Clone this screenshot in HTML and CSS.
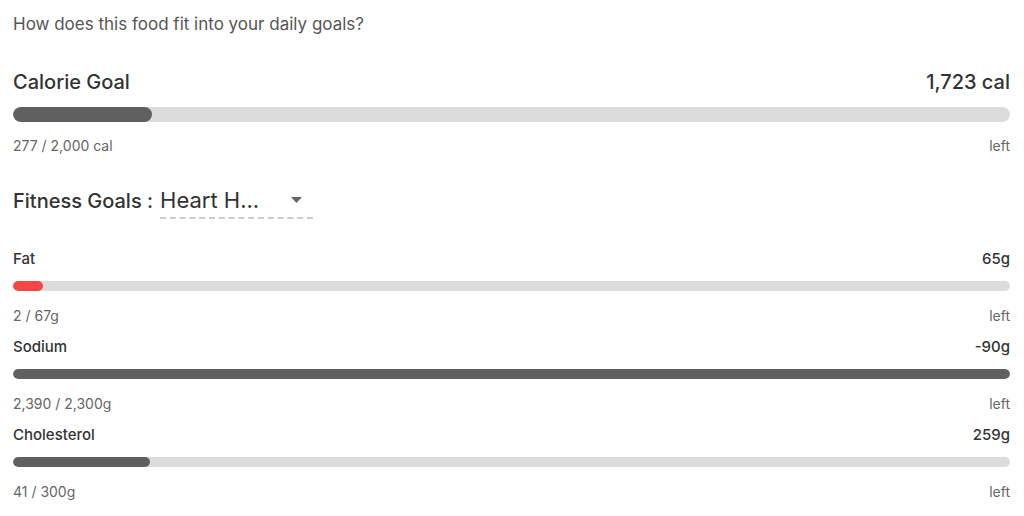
FILE: index.html
```html
<!DOCTYPE html>
<html>
<head>
<meta charset="utf-8">
<link rel="stylesheet" href="styles.css">
</head>
<body>
<div class="page">
  <p class="intro">How does this food fit into your daily goals?</p>

  <section class="calorie">
    <div class="row head">
      <span class="title">Calorie Goal</span>
      <span class="amount">1,723 cal</span>
    </div>
    <div class="track big"><div class="fill" style="width:13.9%"></div></div>
    <div class="row sub">
      <span>277 / 2,000 cal</span>
      <span>left</span>
    </div>
  </section>

  <div class="fitness">
    <span class="flabel">Fitness Goals :</span>
    <div class="select">
      <span class="sval">Heart H...</span>
      <svg class="caret" width="11" height="6" viewBox="0 0 11 6"><path d="M0 0 H11 L5.5 6 Z" fill="#666"/></svg>
    </div>
  </div>

  <section class="nutrient">
    <div class="row nhead"><span>Fat</span><span>65g</span></div>
    <div class="track small"><div class="fill red" style="width:3%"></div></div>
    <div class="row sub"><span>2 / 67g</span><span>left</span></div>
  </section>

  <section class="nutrient">
    <div class="row nhead"><span>Sodium</span><span>-90g</span></div>
    <div class="track small"><div class="fill" style="width:100%"></div></div>
    <div class="row sub"><span>2,390 / 2,300g</span><span>left</span></div>
  </section>

  <section class="nutrient">
    <div class="row nhead"><span>Cholesterol</span><span>259g</span></div>
    <div class="track small"><div class="fill" style="width:13.7%"></div></div>
    <div class="row sub"><span>41 / 300g</span><span>left</span></div>
  </section>
</div>
</body>
</html>
```

FILE: styles.css
```css
* { box-sizing: border-box; }
html, body { margin: 0; padding: 0; background: #fff; }
body { font-family: Inter, "Noto Sans", sans-serif; color: #333; }

.page { padding: 13px 14px 0 13px; }

.intro { margin: 0; font-size: 17px; line-height: 22px; color: #555; }

.row { display: flex; justify-content: space-between; align-items: center; }

.calorie { margin-top: 33px; }
.head { height: 28px; }
.title { font-size: 20px; font-weight: 500; color: #333; }
.amount { font-size: 20px; font-weight: 500; color: #333; }

.track { background: #dcdcdc; border-radius: 999px; overflow: hidden; }
.track.big { height: 15px; margin-top: 11px; }
.track.small { height: 10px; margin-top: 13px; }
.fill { height: 100%; background: #606060; border-radius: 999px; }
.fill.red { background: #f54646; }

.sub { font-size: 14px; color: #666; height: 20px; }
.calorie .sub { margin-top: 13px; }

.fitness { display: flex; align-items: center; margin-top: 27px; height: 37px; }
.flabel { font-size: 20px; font-weight: 500; color: #333; }
.select { display: flex; align-items: center; justify-content: space-between; margin-left: 7px; width: 153px; height: 37px; border-bottom: 2px dashed #ccc; padding-right: 11px; }
.sval { font-size: 22px; color: #333; }
.caret { display: block; }

.nutrient .nhead { font-size: 15px; font-weight: 500; color: #333; height: 20px; }
.fitness + .nutrient { margin-top: 29px; }
.nutrient + .nutrient { margin-top: 11px; }
.nutrient .sub { margin-top: 14px; }
```
